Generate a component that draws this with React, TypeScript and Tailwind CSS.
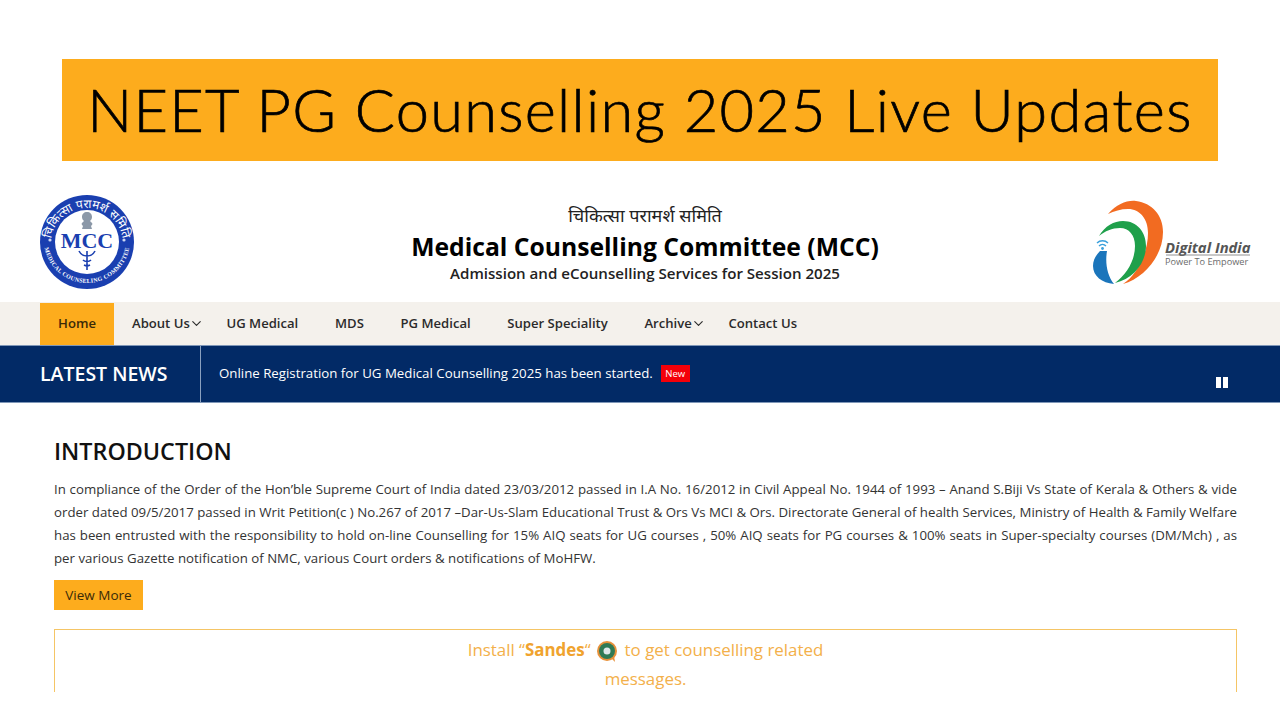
import { ChevronDown } from "lucide-react";

const sans = "font-['Open_Sans','Noto_Sans','Noto_Sans_CJK_SC',sans-serif]";

function MccLogo() {
  return (
    <svg width="96" height="96" viewBox="0 0 96 96" className="shrink-0">
      <defs>
        <path id="mcc-top" d="M12 50 A36 36 0 0 1 84 50" />
        <path id="mcc-bottom" d="M5 46 A43 43 0 0 0 91 46" />
      </defs>
      <circle cx="48" cy="48" r="47" fill="#1a3fb0" />
      <circle cx="48" cy="48" r="32" fill="#fff" />
      <text fontSize="12" fill="#fff" fontFamily="'Noto Sans',sans-serif" textAnchor="middle">
        <textPath href="#mcc-top" startOffset="50%">चिकित्सा परामर्श समिति</textPath>
      </text>
      <text fontSize="6" fontWeight="700" fill="#fff" fontFamily="'Liberation Serif',serif" textAnchor="middle" letterSpacing="0.3">
        <textPath href="#mcc-bottom" startOffset="50%">MEDICAL COUNSELING COMMITTEE</textPath>
      </text>
      <text x="48" y="54" fontSize="22" fontWeight="700" fill="#1a3fb0" textAnchor="middle" fontFamily="'Liberation Serif',serif">
        MCC
      </text>
      <path d="M48 18c-3 0-5 2-5 5 0 2 1 3 2 4l-2 2c-1 1 0 2 1 3l-1 3h10l-1-3c1-1 2-2 1-3l-2-2c1-1 2-2 2-4 0-3-2-5-5-5z" fill="#8b98a8" />
      <path d="M48 57v19M40 57c2 4 5 5 8 5s6-1 8-5M44 66c2 2 6 2 8 0M45 71c2 1 4 1 6 0" stroke="#1a3fb0" strokeWidth="1.6" fill="none" />
      <circle cx="11" cy="46" r="1.6" fill="#cfd8f2" />
      <circle cx="85" cy="46" r="1.6" fill="#cfd8f2" />
    </svg>
  );
}

function DigitalIndiaLogo() {
  return (
    <svg width="160" height="86" viewBox="0 0 160 86" className="shrink-0">
      <path d="M17 15C26 5 36 1 45 2c16 2 27 14 27 31 0 24-19 46-40 52 14-9 25-31 25-51 0-14-8-24-20-24-7 0-14 2-20 5z" fill="#f26b21" />
      <path d="M8 37c6-10 15-15 24-15 14 0 23 11 23 25 0 17-13 33-31 37 11-8 20-22 20-37 0-11-6-18-15-18-8 0-15 3-21 8z" fill="#1fa04b" />
      <path d="M9 52h7c-2 12 0 24 7 33C11 84 2 77 2 67c0-6 3-11 7-15z" fill="#1b75bb" />
      <path d="M6 44c3-3 8-3 11 0M8 47c2-2 5-2 7 0" stroke="#3aa0dc" strokeWidth="1.4" fill="none" />
      <circle cx="11.5" cy="49.5" r="1.4" fill="#3aa0dc" />
      <text x="74" y="54" fontSize="14.8" fontWeight="700" fontStyle="italic" fill="#555" fontFamily="'Open Sans',sans-serif">
        Digital India
      </text>
      <line x1="75" y1="56" x2="159" y2="56" stroke="#777" strokeWidth="0.8" />
      <text x="74" y="66" fontSize="9.2" fill="#6b6b6b" fontFamily="'Open Sans',sans-serif">
        Power To Empower
      </text>
    </svg>
  );
}

function SandesIcon() {
  return (
    <svg width="22" height="23" viewBox="0 0 22 23" className="mt-[4px] mr-[7px] ml-[5px] shrink-0">
      <path d="M15 18l4 4-1-6z" fill="#e8913a" />
      <circle cx="11" cy="11" r="10" fill="#e8913a" />
      <circle cx="11" cy="11" r="8" fill="#2f7a55" />
      <circle cx="11" cy="11" r="3.5" fill="#dfe8ea" />
    </svg>
  );
}

function NavItem({ label, caret }: { label: string; caret?: boolean }) {
  return (
    <li className="flex items-center">
      {label}
      {caret && <ChevronDown size={15} strokeWidth={1.8} className="-mr-[14px] -ml-[1px] shrink-0" />}
    </li>
  );
}

export default function App() {
  return (
    <div className={`flex h-[720px] w-[1280px] flex-col overflow-hidden bg-white ${sans}`}>
      <div className="px-[62px] pt-[59px]">
        <div className="flex h-[102px] items-center justify-center bg-[#fdac1d]">
          <h1 className="font-['Lato',sans-serif] text-[59.5px] leading-none font-light tracking-[1.3px] whitespace-nowrap text-black [-webkit-text-stroke:0.7px_black]">
            NEET PG Counselling 2025 Live Updates
          </h1>
        </div>
      </div>

      <header className="flex h-[141px] items-center justify-between pt-[20px] pr-[29px] pl-[39px]">
        <MccLogo />
        <div className="mt-[1px] flex flex-col items-center pl-[64px] text-black">
          <p className="text-[18px] leading-[27px] text-[#222]">चिकित्सा परामर्श समिति</p>
          <p className="text-[24.7px] leading-[35px] font-bold">Medical Counselling Committee (MCC)</p>
          <p className="text-[15.1px] leading-[18px] font-semibold text-[#222]">Admission and eCounselling Services for Session 2025</p>
        </div>
        <DigitalIndiaLogo />
      </header>

      <nav className="flex h-[43px] bg-[#f4f1ec] pl-[40px] text-[13.1px] font-semibold text-[#2b2b2b]">
        <a className="mt-[1px] flex w-[74px] items-center justify-center bg-[#fdac1d] text-[#3a2a08]">Home</a>
        <ul className="ml-[18px] flex items-center gap-[36.7px] pt-[1px]">
          <NavItem label="About Us" caret />
          <NavItem label="UG Medical" />
          <NavItem label="MDS" />
          <NavItem label="PG Medical" />
          <NavItem label="Super Speciality" />
          <NavItem label="Archive" caret />
          <NavItem label="Contact Us" />
        </ul>
      </nav>

      <div className="flex h-[58px] items-stretch border-y border-[#7f97b8] bg-[#022a66] text-white">
        <div className="flex w-[201px] items-center border-r border-[#8aa0bf] pl-[40px] text-[19.5px] font-semibold">LATEST NEWS</div>
        <div className="flex flex-1 items-start pt-[15px] pl-[18px] text-[13.27px] leading-[24px]">
          <span>Online Registration for UG Medical Counselling 2025 has been started.</span>
          <span className="mt-[4px] ml-[8px] bg-[#f40009] px-[4.5px] text-[9.5px] leading-[17px] font-medium">New</span>
          <span className="mt-[16px] mr-[52px] ml-auto flex gap-[2px]">
            <i className="h-[11px] w-[5px] bg-white" />
            <i className="h-[11px] w-[5px] bg-white" />
          </span>
        </div>
      </div>

      <main className="flex flex-col pr-[43px] pl-[54px]">
        <h2 className="mt-[32px] text-[23.3px] leading-[32px] font-semibold text-[#111]">INTRODUCTION</h2>
        <p className="mt-[11px] text-justify text-[13.25px] leading-[23px] text-[#333]">
          In compliance of the Order of the Hon’ble Supreme Court of India dated 23/03/2012 passed in I.A No. 16/2012 in Civil Appeal No. 1944 of 1993 – Anand S.Biji Vs State of Kerala &amp; Others &amp; vide order dated 09/5/2017 passed in Writ Petition(c ) No.267 of 2017 –Dar-Us-Slam Educational Trust &amp; Ors Vs MCI &amp; Ors. Directorate General of health Services, Ministry of Health &amp; Family Welfare has been entrusted with the responsibility to hold on-line Counselling for 15% AIQ seats for UG courses , 50% AIQ seats for PG courses &amp; 100% seats in Super-specialty courses (DM/Mch) , as per various Gazette notification of NMC, various Court orders &amp; notifications of MoHFW.
        </p>
        <button className="mt-[10px] h-[30px] w-[89px] bg-[#fdac1d] text-[13.5px] text-[#3a2a08]">View More</button>
        <div className="mt-[19px] flex h-[63px] flex-col items-center overflow-hidden border-x border-t border-[#f5c565] pt-[5px] text-[16.9px] leading-[29px] text-[#f3b04a]">
          <p className="flex items-center">
            Install “<b className="font-bold text-[#f0a32e]">Sandes</b>“
            <SandesIcon />
            to get counselling related
          </p>
          <p>messages.</p>
        </div>
      </main>
    </div>
  );
}
